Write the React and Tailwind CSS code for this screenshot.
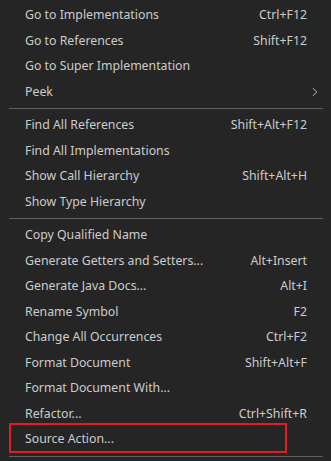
import { FiChevronRight } from "react-icons/fi"

const groups = [
  [
    { label: "Go to Implementations", keys: "Ctrl+F12" },
    { label: "Go to References", keys: "Shift+F12" },
    { label: "Go to Super Implementation" },
    { label: "Peek", submenu: true },
  ],
  [
    { label: "Find All References", keys: "Shift+Alt+F12" },
    { label: "Find All Implementations" },
    { label: "Show Call Hierarchy", keys: "Shift+Alt+H" },
    { label: "Show Type Hierarchy" },
  ],
  [
    { label: "Copy Qualified Name" },
    { label: "Generate Getters and Setters...", keys: "Alt+Insert" },
    { label: "Generate Java Docs...", keys: "Alt+I" },
    { label: "Rename Symbol", keys: "F2" },
    { label: "Change All Occurrences", keys: "Ctrl+F2" },
    { label: "Format Document", keys: "Shift+Alt+F" },
    { label: "Format Document With..." },
    { label: "Refactor...", keys: "Ctrl+Shift+R" },
    { label: "Source Action...", highlight: true },
  ],
]

const MenuItem = ({ item }) => (
  <div className="relative flex h-[25.5px] items-center pl-[25px] pr-[24px]">
    <span className="flex-1 whitespace-nowrap">{item.label}</span>
    {item.keys && <span className="whitespace-nowrap">{item.keys}</span>}
    {item.submenu && (
      <FiChevronRight className="absolute right-[9px] top-1/2 -translate-y-1/2 text-[#c8c8c8]" size={14} strokeWidth={1.6} />
    )}
    {item.highlight && (
      <div className="pointer-events-none absolute left-[9px] top-[-4px] h-[30px] w-[278px] border-2 border-[#e51b24]" />
    )}
  </div>
)

export default function App() {
  return (
    <div className="h-[461px] w-[331px] overflow-hidden bg-[#252526] pt-[2.5px] font-['Noto_Sans',sans-serif] text-[12.3px] text-[#cccccc]">
      {groups.map((group, i) => (
        <div key={i}>
          {group.map(item => (
            <MenuItem key={item.label} item={item} />
          ))}
          <div className="flex h-[8px] items-center pl-[9px] pr-[8px]">
            <div className="h-px w-full bg-[#606060]" />
          </div>
        </div>
      ))}
    </div>
  )
}
